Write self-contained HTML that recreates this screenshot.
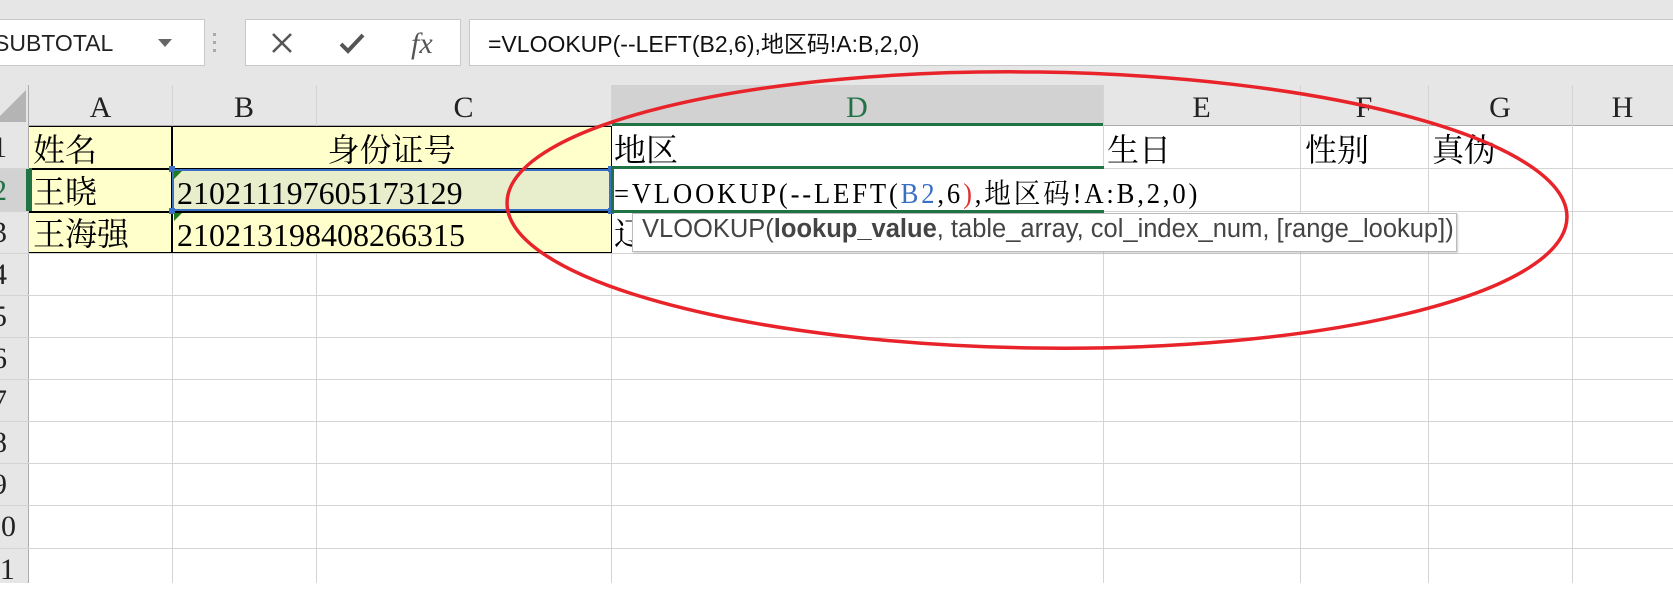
<!DOCTYPE html>
<html><head><meta charset="utf-8"><style>
*{margin:0;padding:0;box-sizing:border-box}
body{width:1673px;height:583px;overflow:hidden;background:#fff;position:relative;font-family:"Liberation Serif","Noto Serif CJK SC",serif}
.a{position:absolute}
.vl{position:absolute;top:85px;height:498px;width:1px;background:#d4d4d4}
.hl{position:absolute;left:0;width:1673px;height:1px;background:#d4d4d4}
.ch{position:absolute;top:85px;height:41px;font-size:30px;color:#222;text-align:center;line-height:46px;transform-origin:center}
.rh{position:absolute;left:-8px;width:30px;font-size:30px;color:#222;line-height:44px}
.t{position:absolute;font-size:32px;color:#000;line-height:48px;white-space:nowrap}
</style></head><body>
<!-- top bar -->
<div class="a" style="left:0;top:0;width:1673px;height:85px;background:#e6e6e6"></div>
<div class="a" style="left:-2px;top:19px;width:207px;height:47px;background:#fff;border:1px solid #c8c8c8"></div>
<div class="a" style="left:-6px;top:30px;font-family:'Liberation Sans',sans-serif;font-size:23px;color:#222">SUBTOTAL</div>
<div class="a" style="left:158px;top:39px;width:0;height:0;border-left:7px solid transparent;border-right:7px solid transparent;border-top:8px solid #666"></div>
<div class="a" style="left:213px;top:33px;width:3px;height:3px;background:#aaa;box-shadow:0 8px 0 #aaa,0 16px 0 #aaa"></div>
<div class="a" style="left:245px;top:19px;width:216px;height:47px;background:#fff;border:1px solid #c8c8c8"></div>
<svg class="a" style="left:270px;top:31px" width="24" height="24"><path d="M3 3L21 21M21 3L3 21" stroke="#555" stroke-width="2.5"/></svg>
<svg class="a" style="left:338px;top:31px" width="28" height="24"><path d="M3 13L10 20L25 4" stroke="#555" stroke-width="4" fill="none"/></svg>
<div class="a" style="left:411px;top:27px;font-family:'Liberation Serif',serif;font-style:italic;font-size:30px;color:#555">fx</div>
<div class="a" style="left:469px;top:19px;width:1210px;height:47px;background:#fff;border:1px solid #c8c8c8"></div>
<div class="a" style="left:488px;top:25px;font-family:'Liberation Sans','Noto Sans CJK SC',sans-serif;font-size:23px;color:#111">=VLOOKUP(--LEFT(B2,6),地区码!A:B,2,0)</div>
<!-- headers -->
<div class="a" style="left:0;top:85px;width:1673px;height:41px;background:#e6e6e6;border-bottom:1px solid #ababab"></div>
<div class="a" style="left:611px;top:85px;width:492px;height:41px;background:#d2d2d2;border-bottom:3px solid #217346"></div>
<div class="a" style="left:0;top:85px;width:29px;height:498px;background:#e6e6e6;border-right:1px solid #ababab"></div>
<div class="a" style="left:0;top:168px;width:29px;height:43px;background:#d2d2d2;border-right:3px solid #217346"></div>
<svg class="a" style="left:0;top:88px" width="28" height="36"><path d="M26 2L26 34L0 34L0 28Z" fill="#b4b4b4"/></svg>
<!-- grid -->
<div class="hl" style="top:168px"></div><div class="hl" style="top:211px"></div><div class="hl" style="top:253px"></div><div class="hl" style="top:295px"></div><div class="hl" style="top:337px"></div><div class="hl" style="top:379px"></div><div class="hl" style="top:421px"></div><div class="hl" style="top:463px"></div><div class="hl" style="top:505px"></div><div class="hl" style="top:548px"></div>
<div class="vl" style="left:172px"></div><div class="vl" style="left:316px"></div><div class="vl" style="left:611px"></div><div class="vl" style="left:1103px"></div><div class="vl" style="left:1300px"></div><div class="vl" style="left:1428px"></div><div class="vl" style="left:1572px"></div>
<div class="ch" style="left:29px;width:143px">A</div>
<div class="ch" style="left:172px;width:144px">B</div>
<div class="ch" style="left:316px;width:295px">C</div>
<div class="ch" style="left:611px;width:492px;color:#217346">D</div>
<div class="ch" style="left:1103px;width:197px">E</div>
<div class="ch" style="left:1300px;width:128px">F</div>
<div class="ch" style="left:1428px;width:144px">G</div>
<div class="ch" style="left:1572px;width:101px">H</div>
<div class="rh" style="top:126px">1</div><div class="rh" style="top:169px;color:#217346">2</div><div class="rh" style="top:211px">3</div><div class="rh" style="top:253px">4</div><div class="rh" style="top:295px">5</div><div class="rh" style="top:337px">6</div><div class="rh" style="top:379px">7</div><div class="rh" style="top:421px">8</div><div class="rh" style="top:463px">9</div><div class="rh" style="top:505px;left:-14px">10</div><div class="rh" style="top:548px;left:-14px">11</div>
<!-- yellow block -->
<div class="a" style="left:29px;top:126px;width:583px;height:127px;background:#ffffcc;border:1.5px solid #000;border-left:none"></div>
<div class="a" style="left:29px;top:168px;width:583px;height:1.5px;background:#000"></div>
<div class="a" style="left:29px;top:211px;width:583px;height:1.5px;background:#000"></div>
<div class="a" style="left:171px;top:126px;width:1.5px;height:127px;background:#000"></div>
<div class="a" style="left:172px;top:169px;width:439px;height:42px;background:#e8eecb;border:2px solid #3a6fc6"></div>
<div class="a" style="left:169px;top:166px;width:6px;height:6px;background:#3a6fc6"></div>
<div class="a" style="left:608px;top:166px;width:6px;height:6px;background:#3a6fc6"></div>
<div class="a" style="left:169px;top:208px;width:6px;height:6px;background:#3a6fc6"></div>
<div class="a" style="left:608px;top:208px;width:6px;height:6px;background:#3a6fc6"></div>
<div class="a" style="left:174px;top:171px;width:0;height:0;border-top:8px solid #1e7b1e;border-right:8px solid transparent"></div>
<div class="a" style="left:174px;top:213px;width:0;height:0;border-top:8px solid #1e7b1e;border-right:8px solid transparent"></div>
<div class="a" style="left:29px;top:168px;width:3px;height:43px;background:#217346"></div>
<div class="t" style="left:33px;top:126px">姓名</div>
<div class="t" style="left:172px;top:126px;width:439px;text-align:center">身份证号</div>
<div class="t" style="left:33px;top:168px">王晓</div>
<div class="t" style="left:33px;top:210px">王海强</div>
<div class="t" style="left:177px;top:169px">210211197605173129</div>
<div class="t" style="left:177px;top:211px">210213198408266315</div>
<!-- D column -->
<div class="t" style="left:614px;top:126px">地区</div>
<div class="t" style="left:1107px;top:126px">生日</div>
<div class="t" style="left:1305px;top:126px">性别</div>
<div class="t" style="left:1432px;top:126px">真伪</div>
<div class="a" style="left:611px;top:166px;width:493px;height:47px;border:3px solid #217346;border-right:none;background:#fff"></div>
<div class="t" style="left:614px;top:171px;font-size:28px;letter-spacing:3px;transform:scaleX(0.95);transform-origin:left">=VLOOKUP(--LEFT(<span style="color:#3a6fc6">B2</span>,6<span style="color:#d33">)</span>,地区码!A:B,2,0)</div>
<div class="t" style="left:614px;top:210px">辽</div>
<div class="a" style="left:632px;top:213px;width:825px;height:39px;background:#fff;border:1px solid #bbb;box-shadow:1px 1px 2px rgba(0,0,0,.2)"></div>
<div class="a" style="left:642px;top:215px;font-family:'Liberation Sans',sans-serif;font-size:25.5px;color:#444;white-space:nowrap">VLOOKUP(<b>lookup_value</b>, table_array, col_index_num, [range_lookup])</div>
<!-- ellipse -->
<svg class="a" style="left:0;top:0" width="1673" height="583"><ellipse cx="1037" cy="210" rx="530" ry="138" transform="rotate(0.8 1037 210)" fill="none" stroke="#e8242a" stroke-width="3.5"/></svg>
</body></html>
